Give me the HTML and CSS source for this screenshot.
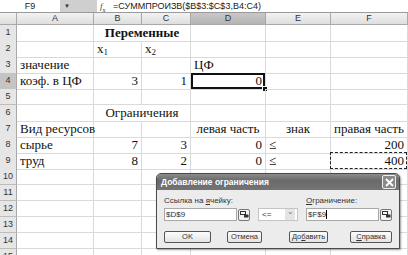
FILE: index.html
```html
<!DOCTYPE html>
<html lang="ru">
<head>
  <meta charset="UTF-8">
  <title>Поиск решения</title>
  <link rel="stylesheet" href="styles.css">
</head>
<body>
  <div class="sheet">
    <!-- Строка формул -->
    <div class="formula-bar">
      <div class="name-box">F9</div>
      <div class="name-drop">&#9660;</div>
      <div class="fx"><i>f</i><sub>x</sub></div>
      <div class="formula">=СУММПРОИЗВ($B$3:$C$3,B4:C4)</div>
    </div>

    <!-- Заголовки столбцов -->
    <div class="row head">
      <div class="hcell corner"></div>
      <div class="hcell">A</div>
      <div class="hcell">B</div>
      <div class="hcell">C</div>
      <div class="hcell active">D</div>
      <div class="hcell">E</div>
      <div class="hcell">F</div>
    </div>

    <div class="row">
      <div class="rnum">1</div>
      <div class="cell"></div>
      <div class="cell span2 center bold">Переменные</div>
      <div class="cell"></div>
      <div class="cell"></div>
      <div class="cell"></div>
    </div>
    <div class="row">
      <div class="rnum">2</div>
      <div class="cell"></div>
      <div class="cell">x<sub>1</sub></div>
      <div class="cell">x<sub>2</sub></div>
      <div class="cell"></div>
      <div class="cell"></div>
      <div class="cell"></div>
    </div>
    <div class="row">
      <div class="rnum">3</div>
      <div class="cell">значение</div>
      <div class="cell"></div>
      <div class="cell"></div>
      <div class="cell">ЦФ</div>
      <div class="cell"></div>
      <div class="cell"></div>
    </div>
    <div class="row">
      <div class="rnum active">4</div>
      <div class="cell">коэф. в ЦФ</div>
      <div class="cell num">3</div>
      <div class="cell num">1</div>
      <div class="cell num selected">0<span class="handle"></span></div>
      <div class="cell"></div>
      <div class="cell"></div>
    </div>
    <div class="row">
      <div class="rnum">5</div>
      <div class="cell"></div>
      <div class="cell"></div>
      <div class="cell"></div>
      <div class="cell"></div>
      <div class="cell"></div>
      <div class="cell"></div>
    </div>
    <div class="row">
      <div class="rnum">6</div>
      <div class="cell"></div>
      <div class="cell span2 center">Ограничения</div>
      <div class="cell"></div>
      <div class="cell"></div>
      <div class="cell"></div>
    </div>
    <div class="row">
      <div class="rnum">7</div>
      <div class="cell">Вид ресурсов</div>
      <div class="cell"></div>
      <div class="cell"></div>
      <div class="cell center">левая часть</div>
      <div class="cell center">знак</div>
      <div class="cell center">правая часть</div>
    </div>
    <div class="row">
      <div class="rnum">8</div>
      <div class="cell">сырье</div>
      <div class="cell num">7</div>
      <div class="cell num">3</div>
      <div class="cell num">0</div>
      <div class="cell">≤</div>
      <div class="cell num">200</div>
    </div>
    <div class="row">
      <div class="rnum">9</div>
      <div class="cell">труд</div>
      <div class="cell num">8</div>
      <div class="cell num">2</div>
      <div class="cell num">0</div>
      <div class="cell">≤</div>
      <div class="cell num copied">400</div>
    </div>
    <div class="row"><div class="rnum">10</div><div class="cell"></div><div class="cell"></div><div class="cell"></div><div class="cell"></div><div class="cell"></div><div class="cell"></div></div>
    <div class="row"><div class="rnum">11</div><div class="cell"></div><div class="cell"></div><div class="cell"></div><div class="cell"></div><div class="cell"></div><div class="cell"></div></div>
    <div class="row"><div class="rnum">12</div><div class="cell"></div><div class="cell"></div><div class="cell"></div><div class="cell"></div><div class="cell"></div><div class="cell"></div></div>
    <div class="row"><div class="rnum">13</div><div class="cell"></div><div class="cell"></div><div class="cell"></div><div class="cell"></div><div class="cell"></div><div class="cell"></div></div>
    <div class="row"><div class="rnum">14</div><div class="cell"></div><div class="cell"></div><div class="cell"></div><div class="cell"></div><div class="cell"></div><div class="cell"></div></div>
    <div class="row"><div class="rnum">15</div><div class="cell"></div><div class="cell"></div><div class="cell"></div><div class="cell"></div><div class="cell"></div><div class="cell"></div></div>

    <!-- Диалог -->
    <div class="dialog">
      <div class="dlg-title">
        <span>Добавление ограничения</span>
        <span class="dlg-close">
          <svg width="9" height="9" viewBox="0 0 9 9"><path d="M1 1 L8 8 M8 1 L1 8" stroke="#fff" stroke-width="1.8"/></svg>
        </span>
      </div>
      <div class="dlg-body">
        <div class="fields">
          <div class="field">
            <div class="label">Ссылка на <u>я</u>чейку:</div>
            <div class="input-row">
              <div class="input">$D$9</div>
              <div class="ref-btn"><svg width="9" height="7" viewBox="0 0 9 7"><rect x="0.5" y="0.5" width="5" height="3" fill="none" stroke="#333"/><rect x="4" y="3.5" width="4.5" height="3" fill="#333"/></svg></div>
            </div>
          </div>
          <div class="select">
            <span>&lt;=</span>
            <span class="sel-arrow">&#8964;</span>
          </div>
          <div class="field">
            <div class="label"><u>О</u>граничение:</div>
            <div class="input-row">
              <div class="input">$F$9<span class="caret"></span></div>
              <div class="ref-btn"><svg width="9" height="7" viewBox="0 0 9 7"><rect x="0.5" y="0.5" width="5" height="3" fill="none" stroke="#333"/><rect x="4" y="3.5" width="4.5" height="3" fill="#333"/></svg></div>
            </div>
          </div>
        </div>
        <div class="buttons">
          <div class="btn btn-ok">OK</div>
          <div class="btn btn-cancel">Отмена</div>
          <div class="btn btn-add">До<u>б</u>авить</div>
          <div class="btn btn-help"><u>С</u>правка</div>
        </div>
      </div>
    </div>
  </div>
</body>
</html>
```

FILE: styles.css
```css
/* Общий вид */
body {
  margin: 0;
  background: #fff;
  font-family: 'Liberation Serif', serif;
}

.sheet {
  position: relative;
  width: 408px;
  height: 255px;
  overflow: hidden;
}

/* Строка формул */
.formula-bar {
  display: flex;
  height: 12px;
  border-bottom: 1px solid #9a9a9a;
  font-family: 'Liberation Sans', sans-serif;
  font-size: 9px;
  line-height: 12px;
  color: #222;
}

.name-box {
  width: 60px;
  text-align: center;
}

.name-drop {
  width: 33px;
  padding-left: 4px;
  background: #cfcfcf;
  font-size: 6px;
  color: #333;
}

.fx {
  width: 13px;
  padding-left: 3px;
  font-family: 'Liberation Serif', serif;
  font-size: 9px;
  color: #444;
}

.fx sub {
  font-size: 6px;
}

.formula {
  white-space: nowrap;
}

/* Сетка листа */
.row {
  display: grid;
  grid-template-columns: 17px 77px 48px 49px 75px 65px 77px;
  height: 16px;
}

.row.head {
  height: 12px;
}

.hcell {
  box-sizing: border-box;
  background: linear-gradient(#f2f2f2, #dedede);
  border-right: 1px solid #a9a9a9;
  border-bottom: 1px solid #a9a9a9;
  font-family: 'Liberation Sans', sans-serif;
  font-size: 9px;
  line-height: 11px;
  text-align: center;
  color: #333;
}

.hcell.active {
  background: linear-gradient(#c8c8c8, #b4b4b4);
}

.rnum {
  box-sizing: border-box;
  background: #e6e6e6;
  border-right: 1px solid #a9a9a9;
  border-bottom: 1px solid #bdbdbd;
  font-family: 'Liberation Sans', sans-serif;
  font-size: 9px;
  line-height: 15px;
  text-align: center;
  color: #333;
}

.rnum.active {
  background: #c4c4c4;
}

.cell {
  position: relative;
  box-sizing: border-box;
  border-right: 1px solid #dadada;
  border-bottom: 1px solid #dadada;
  padding: 0 3px;
  font-size: 13px;
  line-height: 16px;
  white-space: nowrap;
  color: #111;
}

.cell sub {
  font-size: 9px;
  vertical-align: -2px;
  line-height: 0;
}

.span2 {
  grid-column: span 2;
}

.center {
  text-align: center;
}

.bold {
  font-weight: bold;
}

.num {
  text-align: right;
}

/* Активная ячейка */
.selected {
  box-shadow: inset 0 0 0 2px #111;
}

.handle {
  position: absolute;
  right: -3px;
  bottom: -3px;
  width: 4px;
  height: 4px;
  background: #111;
  border: 1px solid #fff;
}

/* Скопированная ячейка */
.copied::after {
  content: "";
  position: absolute;
  left: -1px;
  top: -1px;
  right: 0;
  bottom: 0;
  border: 1px dashed #222;
}

/* Диалоговое окно */
.dialog {
  position: absolute;
  left: 156px;
  top: 173px;
  width: 242px;
  height: 74px;
  background: #ececec;
  border: 1px solid #4a4a4a;
  border-radius: 5px 5px 0 0;
  box-shadow: 1px 1px 2px rgba(0, 0, 0, 0.4);
  font-family: 'Liberation Sans', sans-serif;
  color: #333;
}

.dlg-title {
  display: flex;
  justify-content: space-between;
  align-items: center;
  height: 16px;
  padding: 0 3px 0 4px;
  background: linear-gradient(#8c8c8c, #6a6a6a 40%, #747474);
  border-radius: 4px 4px 0 0;
  font-size: 8.5px;
  font-weight: bold;
  color: #fff;
}

.dlg-close {
  display: flex;
  align-items: center;
  justify-content: center;
  width: 12px;
  height: 12px;
  background: #8a8a8a;
  border: 1px solid #eee;
  border-radius: 2px;
}

.dlg-body {
  padding: 6px 7px 0 7px;
}

.fields {
  display: flex;
  align-items: flex-end;
  gap: 8px;
}

.label {
  font-size: 8px;
  line-height: 10px;
  margin-bottom: 2px;
}

.input-row {
  display: flex;
  gap: 1px;
  align-items: center;
}

.input {
  box-sizing: border-box;
  width: 73px;
  height: 13px;
  padding-left: 1px;
  background: #fff;
  border: 1px solid #a8a8a8;
  font-size: 8px;
  line-height: 11px;
}

.caret {
  display: inline-block;
  width: 1px;
  height: 9px;
  background: #000;
  vertical-align: -2px;
}

.ref-btn {
  box-sizing: border-box;
  display: flex;
  align-items: center;
  justify-content: center;
  width: 12px;
  height: 12px;
  background: #f4f4f4;
  border: 1px solid #777;
  border-radius: 2px;
}

.select {
  box-sizing: border-box;
  display: flex;
  justify-content: space-between;
  width: 42px;
  height: 13px;
  padding: 0 2px 0 3px;
  background: #fff;
  border: 1px solid #c4c4c4;
  font-size: 8px;
  line-height: 11px;
}

.sel-arrow {
  width: 10px;
  background: #e4e4e4;
  text-align: center;
  color: #777;
  font-size: 8px;
  line-height: 6px;
}

/* Кнопки */
.buttons {
  display: flex;
  margin-top: 10px;
}

.btn {
  box-sizing: border-box;
  height: 12px;
  background: linear-gradient(#fdfdfd, #e4e4e4);
  border: 1px solid #555;
  border-radius: 2px;
  font-size: 7.5px;
  line-height: 10px;
  text-align: center;
}

.btn-ok {
  width: 47px;
}

.btn-cancel {
  width: 35px;
  margin-left: 16px;
}

.btn-add {
  width: 39px;
  margin-left: 27px;
}

.btn-help {
  width: 42px;
  margin-left: 22px;
}
```
